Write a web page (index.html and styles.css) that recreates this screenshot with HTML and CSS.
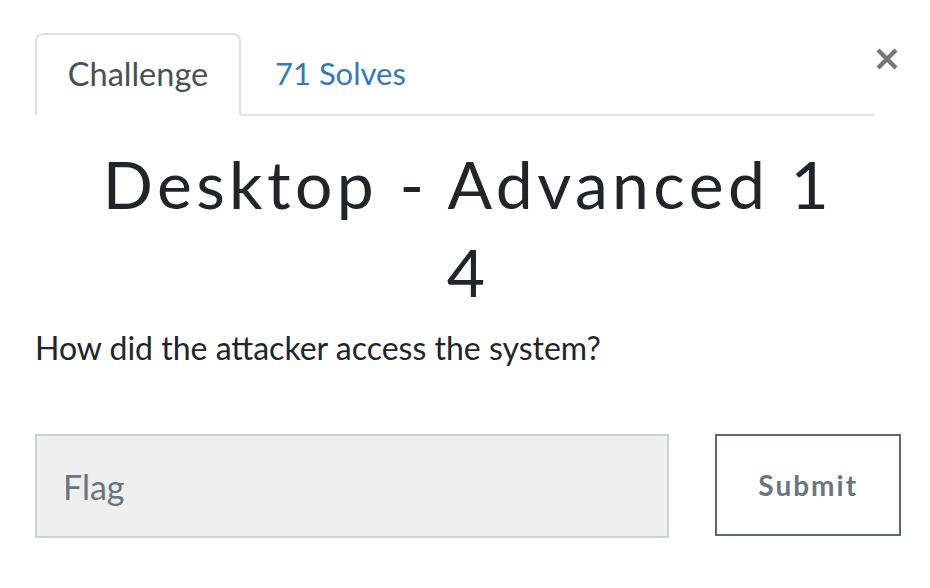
FILE: index.html
```html
<!DOCTYPE html>
<html>
<head>
<meta charset="utf-8">
<link rel="stylesheet" href="styles.css">
</head>
<body>
<div class="modal">
  <div class="header">
    <ul class="tabs">
      <li class="tab active">Challenge</li>
      <li class="tab link">71 Solves</li>
    </ul>
    <button class="close" aria-label="Close">
      <svg width="24" height="24" viewBox="0 0 24 24"><path d="M3 3 L21 21 M21 3 L3 21" stroke="#777" stroke-width="4.4" stroke-linecap="butt"/></svg>
    </button>
  </div>
  <h2 class="title">Desktop - Advanced 1 4</h2>
  <p class="question">How did the attacker access the system?</p>
  <form class="flag-row">
    <input class="flag" type="text" placeholder="Flag">
    <button class="submit" type="button">Submit</button>
  </form>
</div>
</body>
</html>
```
FILE: styles.css
```css
html, body {
  margin: 0;
  padding: 0;
  background: #fff;
}
body {
  font-family: Lato, "Noto Sans", sans-serif;
  color: #212529;
}
.modal {
  padding: 33px 29px 0 35px;
}
.header {
  display: flex;
  align-items: flex-start;
}
.tabs {
  list-style: none;
  margin: 0;
  padding: 0;
  display: flex;
  width: 839px;
  border-bottom: 2px solid #dee2e6;
  height: 81px;
}
.tab {
  font-size: 31px;
  line-height: 81px;
  padding: 0 0 0 34px;
  box-sizing: border-box;
  height: 83px;
}
.tab.active {
  color: #495057;
  border: 2px solid #dee2e6;
  border-bottom: 2px solid #fff;
  border-radius: 8px 8px 0 0;
  line-height: 77px;
  width: 206px;
  padding: 0;
  text-align: center;
  font-size: 32.5px;
}
.tab.link {
  color: #337ab7;
}
.close {
  border: 0;
  background: none;
  padding: 0;
  margin: 14px 0 0 1px;
  width: 24px;
  height: 24px;
  display: flex;
}
.title {
  font-family: Lato, sans-serif;
  font-weight: 400;
  font-size: 66px;
  letter-spacing: 4.4px;
  line-height: 88px;
  text-align: center;
  margin: 24px 0 0;
  padding: 0 60px;
  color: #212529;
}
.question {
  font-size: 32px;
  margin: 12px 0 0;
  line-height: 40px;
}
.flag-row {
  display: flex;
  margin-top: 66px;
  gap: 46px;
}
.flag {
  width: 636px;
  height: 104px;
  box-sizing: border-box;
  border: 2px solid #ccd1d9;
  background: #efefef;
  font-family: Lato, sans-serif;
  font-size: 34px;
  padding: 0 26px;
  color: #495057;
  outline: none;
}
.flag::placeholder {
  color: #6c757d;
}
.submit {
  width: 186px;
  height: 102px;
  box-sizing: border-box;
  border: 2px solid #5f686f;
  background: #fff;
  color: #6c757d;
  font-family: Lato, sans-serif;
  font-weight: 700;
  font-size: 28px;
  letter-spacing: 2px;
}
```
